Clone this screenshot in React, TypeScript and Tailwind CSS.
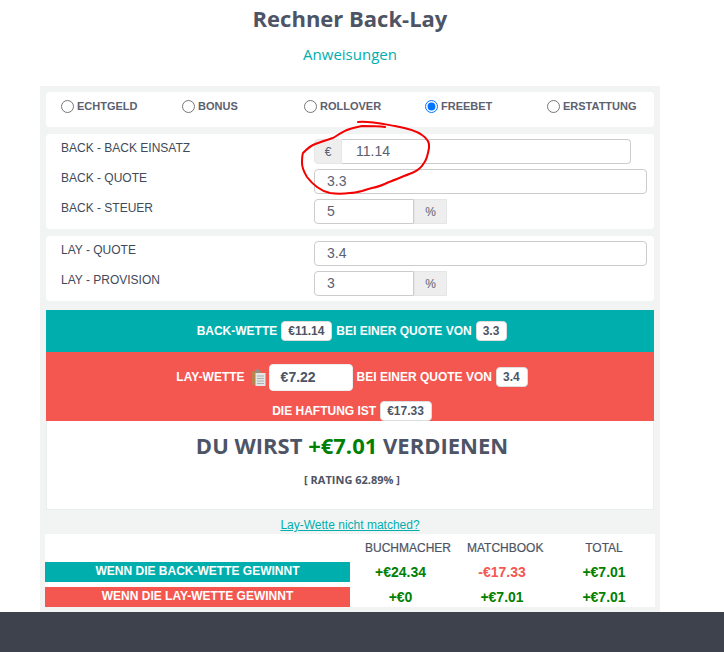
const radios = ['ECHTGELD', 'BONUS', 'ROLLOVER', 'FREEBET', 'ERSTATTUNG'];

function Row({ label, children }: { label: string; children: React.ReactNode }) {
  return (
    <div className="flex h-[25px]">
      <div className="w-[268px] pl-[15px] pt-[1px] text-[12px] leading-[16px] text-[#3f4a5a]">{label}</div>
      <div className="flex">{children}</div>
    </div>
  );
}

function Field({ value, className }: { value: string; className: string }) {
  return (
    <div className={`h-[25px] border border-[#cccccc] bg-white text-[14px] leading-[23px] text-[#5b6170] ${className}`}>
      {value}
    </div>
  );
}

function Addon({ text, className }: { text: string; className: string }) {
  return (
    <div className={`flex h-[25px] items-center justify-center border border-[#e6e6e6] bg-[#eeeeee] text-[12px] text-[#5b6170] ${className}`}>
      {text}
    </div>
  );
}

function Chip({ text }: { text: string }) {
  return (
    <span className="mx-[4px] inline-flex h-[20px] items-center rounded-[4px] border border-[#dddddd] bg-white pr-[7px] pl-[6px] text-[12px] font-bold text-[#4d5465]">
      {text}
    </span>
  );
}

function ClipboardIcon() {
  return (
    <svg width="14" height="17" viewBox="0 0 14 17" className="mr-[3px] ml-[7px]">
      <rect x="0" y="2" width="10" height="14" rx="1" fill="#b9834f" />
      <rect x="3" y="0.5" width="5" height="3" rx="1" fill="#8f8f8f" />
      <rect x="3.5" y="4" width="10" height="13" fill="#e3e6e4" />
      <path d="M5 7h7M5 9.5h7M5 12h7M5 14.5h7" stroke="#a9b0ae" strokeWidth="1" />
    </svg>
  );
}

export default function App() {
  return (
    <div className="relative h-[652px] w-[724px] overflow-hidden bg-white font-['Liberation_Sans',Arial,sans-serif]">
      <div className="h-[612px]">
        <h1 className="h-[42px] w-[700px] pt-[3px] text-center font-['Open_Sans',sans-serif] text-[22px] leading-[30px] font-bold text-[#4d5465]">
          Rechner Back-Lay
        </h1>
        <div className="h-[44px] w-[700px] text-center font-['Open_Sans',sans-serif] text-[15px] leading-[24px] text-[#00aeae]">
          Anweisungen
        </div>

        <div className="ml-[40px] h-[526px] w-[620px] bg-[#f2f4f4] pt-[6px]">
          {/* Wett-Typ */}
          <div className="mx-[6px] grid h-[35px] grid-cols-[121px_122px_121px_122px_122px] items-center rounded-[4px] bg-white pb-[6px]">
            {radios.map((r) => (
              <label key={r} className="flex items-center gap-[3px] pl-[15px] text-[11px] font-bold text-[#5b6170]">
                <input type="radio" name="typ" defaultChecked={r === 'FREEBET'} className="m-0 h-[13px] w-[13px]" />
                {r}
              </label>
            ))}
          </div>

          {/* Back */}
          <div className="mx-[6px] mt-[7px] flex h-[95px] flex-col gap-[5px] rounded-[4px] bg-white pt-[5px]">
            <Row label="BACK - BACK EINSATZ">
              <Addon text="€" className="w-[28px] rounded-l-[4px]" />
              <Field value="11.14" className="w-[289px] rounded-r-[4px] border-l-0 pl-[14px]" />
            </Row>
            <Row label="BACK - QUOTE">
              <Field value="3.3" className="w-[333px] rounded-[4px] pl-[12px]" />
            </Row>
            <Row label="BACK - STEUER">
              <Field value="5" className="w-[100px] rounded-l-[4px] pl-[12px]" />
              <Addon text="%" className="w-[33px]" />
            </Row>
          </div>

          {/* Lay */}
          <div className="mx-[6px] mt-[7px] flex h-[65px] flex-col gap-[5px] rounded-[4px] bg-white pt-[5px]">
            <Row label="LAY - QUOTE">
              <Field value="3.4" className="w-[333px] rounded-[4px] pl-[12px]" />
            </Row>
            <Row label="LAY - PROVISION">
              <Field value="3" className="w-[100px] rounded-l-[4px] pl-[12px]" />
              <Addon text="%" className="w-[33px]" />
            </Row>
          </div>

          {/* Ergebnis */}
          <div className="mx-[6px] mt-[9px]">
            <div className="flex h-[42px] items-center justify-center bg-[#00aeae] pl-[8px] text-[12px] font-bold text-white">
              BACK-WETTE
              <Chip text="€11.14" />
              BEI EINER QUOTE VON
              <Chip text="3.3" />
            </div>
            <div className="h-[69px] bg-[#f4574f] text-[12px] font-bold text-white">
              <div className="flex h-[48px] items-center justify-center pt-[2px] pl-[8px]">
                LAY-WETTE
                <ClipboardIcon />
                <span className="mr-[4px] flex h-[27px] w-[84px] items-center rounded-[4px] border border-[#eeeeee] bg-white pl-[11px] text-[14px] text-[#4d5465]">
                  €7.22
                </span>
                BEI EINER QUOTE VON
                <Chip text="3.4" />
              </div>
              <div className="flex h-[21px] items-center justify-center pl-[8px]">
                DIE HAFTUNG IST
                <Chip text="€17.33" />
              </div>
            </div>
            <div className="h-[89px] border-x border-b border-[#eceeee] bg-white pt-[9px] pl-[4px] text-center font-['Open_Sans',sans-serif] font-bold text-[#4d5465]">
              <div className="text-[22px] leading-[30px]">
                DU WIRST <span className="text-[#008000]">+€7.01</span> VERDIENEN
              </div>
              <div className="mt-[12px] text-[11px] leading-[16px]">[ RATING 62.89% ]</div>
            </div>
          </div>

          <div className="flex h-[24px] items-center justify-center pt-[6px]">
            <a className="text-[12px] text-[#00aeae] underline">Lay-Wette nicht matched?</a>
          </div>

          {/* Tabelle */}
          <div className="mx-[5px] grid grid-cols-[305px_101px_102px_102px] grid-rows-[28px_20px_5px_20px] bg-white text-[14px] font-bold">
            <div />
            <div className="pl-[15px] text-[12px] leading-[29px] font-normal whitespace-nowrap text-[#4d5465] [-webkit-text-stroke:0.2px]">BUCHMACHER</div>
            <div className="pl-[16px] text-[12px] leading-[29px] font-normal whitespace-nowrap text-[#4d5465] [-webkit-text-stroke:0.2px]">MATCHBOOK</div>
            <div className="text-center text-[12px] leading-[29px] font-normal text-[#4d5465] [-webkit-text-stroke:0.2px]">TOTAL</div>

            <div className="bg-[#00aeae] text-center text-[12px] leading-[18px] text-white">WENN DIE BACK-WETTE GEWINNT</div>
            <div className="text-center leading-[20px] text-[#008000]">+€24.34</div>
            <div className="text-center leading-[20px] text-[#f4574f]">-€17.33</div>
            <div className="text-center leading-[20px] text-[#008000]">+€7.01</div>

            <div className="col-span-4" />

            <div className="bg-[#f4574f] text-center text-[12px] leading-[18px] text-white">WENN DIE LAY-WETTE GEWINNT</div>
            <div className="text-center leading-[20px] text-[#008000]">+€0</div>
            <div className="text-center leading-[20px] text-[#008000]">+€7.01</div>
            <div className="text-center leading-[20px] text-[#008000]">+€7.01</div>
          </div>
        </div>
      </div>
      <div className="h-[40px] bg-[#3d424d]" />

      {/* rote Handmarkierung */}
      <svg className="pointer-events-none absolute top-0 left-0" width="724" height="652" fill="none">
        <path
          d="M358 122 C370 121 383 124 395 126 C406 128 417 131 422 135 C428 139 430 143 429 148 C428 154 427 159 424 163 C421 168 417 171 412 173 C404 176 397 179 389 182 C383 185 378 187 372 188 C368 189 365 190 362 191 C358 192 354 193 350 193 C343 194 336 194 330 193 C325 192 321 190 317 187 C313 184 310 181 307 177 C304 172 302 168 302 163 C302 159 302 156 303 153 C306 150 309 147 313 145 C320 142 327 140 333 138 C338 135 342 132 347 130 C352 128 357 127 362 126 C370 126 378 126 385 127"
          stroke="#f40000"
          strokeWidth="2"
          strokeLinecap="round"
          strokeLinejoin="round"
        />
      </svg>
    </div>
  );
}
